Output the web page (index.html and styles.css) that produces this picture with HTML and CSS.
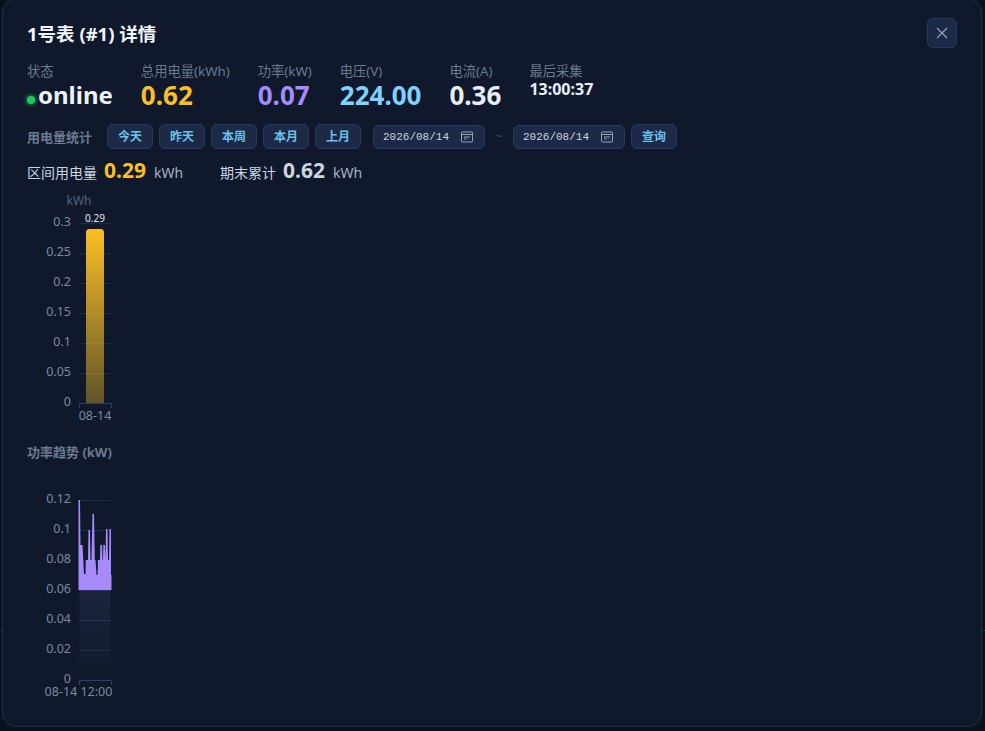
FILE: index.html
```html
<!DOCTYPE html>
<html lang="zh">
<head>
<meta charset="utf-8">
<title>1号表 详情</title>
<link rel="stylesheet" href="styles.css">
</head>
<body>
<div class="backdrop">
  <main class="modal">
    <header class="modal-head">
      <h1 class="title">1号表 (#1) 详情</h1>
      <button class="close" aria-label="关闭">
        <svg class="close-icon" viewBox="0 0 12 12"><path d="M1 1 11 11M11 1 1 11"/></svg>
      </button>
    </header>

    <section class="stats">
      <div class="stat">
        <div class="stat-label">状态</div>
        <div class="stat-value online"><span class="dot"></span>online</div>
      </div>
      <div class="stat">
        <div class="stat-label">总用电量(kWh)</div>
        <div class="stat-value amber">0.62</div>
      </div>
      <div class="stat">
        <div class="stat-label">功率(kW)</div>
        <div class="stat-value violet">0.07</div>
      </div>
      <div class="stat">
        <div class="stat-label">电压(V)</div>
        <div class="stat-value sky">224.00</div>
      </div>
      <div class="stat">
        <div class="stat-label">电流(A)</div>
        <div class="stat-value white">0.36</div>
      </div>
      <div class="stat">
        <div class="stat-label">最后采集</div>
        <div class="stat-time">13:00:37</div>
      </div>
    </section>

    <section class="toolbar">
      <span class="toolbar-label">用电量统计</span>
      <div class="quick">
        <button class="btn">今天</button>
        <button class="btn">昨天</button>
        <button class="btn">本周</button>
        <button class="btn">本月</button>
        <button class="btn">上月</button>
      </div>
      <div class="range">
        <div class="date"><span>2026/08/14</span>
          <svg class="cal" viewBox="0 0 12 12"><path d="M1.500 1h9a1 1 0 0 1 1 1v8a1 1 0 0 1-1 1h-9a1 1 0 0 1-1-1V2a1 1 0 0 1 1-1ZM.5 3.500h11M3 6h6M3 8h2.500M7 8h.5"/></svg>
        </div>
        <span class="tilde">~</span>
        <div class="date"><span>2026/08/14</span>
          <svg class="cal" viewBox="0 0 12 12"><path d="M1.500 1h9a1 1 0 0 1 1 1v8a1 1 0 0 1-1 1h-9a1 1 0 0 1-1-1V2a1 1 0 0 1 1-1ZM.5 3.500h11M3 6h6M3 8h2.500M7 8h.5"/></svg>
        </div>
        <button class="btn">查询</button>
      </div>
    </section>

    <section class="summary">
      <div class="sum-item"><span class="sum-label">区间用电量</span><b class="sum-num amber">0.29</b><span class="sum-unit">kWh</span></div>
      <div class="sum-item"><span class="sum-label">期末累计</span><b class="sum-num pale">0.62</b><span class="sum-unit">kWh</span></div>
    </section>

    <svg class="chart energy" viewBox="0 0 100 232" width="100" height="232">
      <defs>
        <linearGradient id="barFill" x1="0" y1="0" x2="0" y2="1">
          <stop offset="0" stop-color="#fbbf24"/>
          <stop offset="1" stop-color="#fbbf24" stop-opacity=".35"/>
        </linearGradient>
      </defs>
      <text class="axis-name" x="52" y="14" text-anchor="middle">kWh</text>
      <g class="grid">
        <path d="M52 32.500H84M52 62.500H84M52 92.500H84M52 122.500H84M52 152.500H84M52 182.500H84"/>
      </g>
      <path class="bar" fill="url(#barFill)" d="M59 212V41.500a3.500 3.500 0 0 1 3.500-3.500h11A3.500 3.500 0 0 1 77 41.500V212Z"/>
      <path class="axis" d="M52.500 217V212.500H84.500V217"/>
      <g class="tick" text-anchor="end">
        <text x="44" y="35">0.3</text>
        <text x="44" y="65">0.25</text>
        <text x="44" y="95">0.2</text>
        <text x="44" y="125">0.15</text>
        <text x="44" y="155">0.1</text>
        <text x="44" y="185">0.05</text>
        <text x="44" y="215">0</text>
      </g>
      <text class="bar-label" x="68" y="31" text-anchor="middle">0.29</text>
      <text class="tick" x="68" y="229" text-anchor="middle">08-14</text>
    </svg>

    <h2 class="chart-title">功率趋势 (kW)</h2>

    <svg class="chart power" viewBox="0 0 100 220" width="100" height="220">
      <defs>
        <linearGradient id="areaFill" x1="0" y1="0" x2="0" y2="1">
          <stop offset="0" stop-color="#a78bfa" stop-opacity=".09"/>
          <stop offset="1" stop-color="#a78bfa" stop-opacity="0"/>
        </linearGradient>
      </defs>
      <g class="grid">
        <path d="M52 10.500H84M52 40.500H84M52 70.500H84M52 100.500H84M52 130.500H84M52 160.500H84"/>
      </g>
      <rect x="52.500" y="100" width="31" height="90" fill="url(#areaFill)"/>
      <path class="spikes" d="M51.500 100V10H53L53.500 55H55.500L57 84H58.500L58.800 70H61L61.500 40H63L63.500 70H64.500L65.500 24H67L67.800 70H68.500L69.500 85H70.500L71 70H73L73.300 55H75L75.500 70H76L76.300 55H78L78.500 70L79 39H80.500L81 70H82L82.500 39H84V85H84.500V100Z"/>
      <path class="axis" d="M52.500 195V190.500H84.500V195"/>
      <g class="tick" text-anchor="end">
        <text x="44" y="12.500">0.12</text>
        <text x="44" y="42.500">0.1</text>
        <text x="44" y="72.500">0.08</text>
        <text x="44" y="102.500">0.06</text>
        <text x="44" y="132.500">0.04</text>
        <text x="44" y="162.500">0.02</text>
        <text x="44" y="192.500">0</text>
      </g>
      <text class="tick wide" x="51.500" y="206" text-anchor="middle">08-14 12:00</text>
    </svg>
  </main>
</div>
</body>
</html>
```

FILE: styles.css
```css
* { box-sizing: border-box; }

html, body {
  margin: 0;
  height: 100%;
  overflow: hidden;
}

body {
  background: linear-gradient(#1d3a52, #1d3a52) 0 630px / 100% 1px no-repeat, #0a111e;
  font-family: "Noto Sans", "Noto Sans CJK SC", sans-serif;
  color: #e2e8f0;
}

.backdrop {
  height: 731px;
  padding: 0 3px 4px 2px;
  overflow: hidden;
}

.modal {
  height: 729px;
  margin-top: -2px;
  background: #0f192b;
  border: 1px solid #1e3050;
  border-radius: 14px;
  padding: 21px 24px 0;
}

.modal-head {
  display: flex;
  justify-content: space-between;
  align-items: flex-start;
  height: 38px;
}

.title {
  margin: 0;
  font-size: 18.5px;
  line-height: 28px;
  font-weight: 700;
  color: #f1f5f9;
}

.close {
  width: 30px;
  height: 30px;
  margin: -2px 0 0;
  padding: 0;
  background: #1c2a47;
  border: 1px solid #293a5c;
  border-radius: 6px;
  display: flex;
  align-items: center;
  justify-content: center;
}

.close-icon {
  width: 12px;
  height: 12px;
  fill: none;
  stroke: #94a3b8;
  stroke-width: 1.2;
}

.stats {
  display: flex;
  gap: 28px;
  margin-top: 5px;
  height: 53px;
}

.stat-label {
  font-size: 13.300px;
  line-height: 16px;
  color: #6b7a90;
}

.stat-value {
  font-size: 26px;
  line-height: 32px;
  font-weight: 700;
}

.online {
  display: flex;
  align-items: center;
  font-size: 24px;
  color: #eef2fb;
}

.dot {
  width: 8px;
  height: 8px;
  margin: 10px 3px 0 0;
  border-radius: 50%;
  background: #22c55e;
  box-shadow: 0 0 4px #22c55e;
}

.amber { color: #fbbf24; }
.violet { color: #a78bfa; }
.sky { color: #7dd3fc; }
.white { color: #e8eefa; }
.pale { color: #cbd5e1; }

.stat-time {
  font-size: 16px;
  line-height: 20px;
  font-weight: 700;
  color: #e8eefa;
}

.toolbar {
  display: flex;
  align-items: center;
  margin-top: 7px;
  height: 26px;
}

.toolbar-label {
  width: 80px;
  font-size: 13px;
  font-weight: 700;
  color: #6b7a90;
}

.quick,
.range {
  display: flex;
  align-items: center;
  gap: 6px;
}

.range {
  margin-left: 12px;
}

.btn {
  width: 46px;
  height: 25px;
  padding: 0;
  font: 700 12px "Noto Sans", "Noto Sans CJK SC", sans-serif;
  color: #6cc0ea;
  background: #1c2a47;
  border: 1px solid #293a5c;
  border-radius: 6px;
}

.date {
  width: 112px;
  height: 24px;
  margin-top: 1px;
  padding: 0 11px 0 9px;
  display: flex;
  align-items: center;
  justify-content: space-between;
  background: #1c2a47;
  border: 1px solid #293a5c;
  border-radius: 6px;
  font-family: "Liberation Mono", monospace;
  font-size: 11px;
  color: #cbd5e1;
}

.cal {
  width: 12px;
  height: 12px;
  fill: none;
  stroke: #98a2b3;
  stroke-width: 1;
}

.tilde {
  width: 16px;
  text-align: center;
  font-size: 12px;
  color: #3f4e66;
}

.summary {
  display: flex;
  gap: 37px;
  align-items: baseline;
  margin-top: 6px;
  height: 30px;
  line-height: 30px;
}

.sum-item {
  display: flex;
  align-items: baseline;
}

.sum-label {
  font-size: 14px;
  color: #cbd5e1;
}

.sum-num {
  font-size: 21px;
  margin: 0 8px 0 7px;
}

.sum-unit {
  font-size: 14px;
  color: #a3b1c6;
}

.chart {
  display: block;
}

.energy {
  margin: 6px 0 0 0;
}

.chart-title {
  margin: 20px 0 0;
  font-size: 13px;
  line-height: 18px;
  font-weight: 700;
  color: #6b7a90;
}

.power {
  margin-top: 29px;
}

.axis-name {
  font-size: 12px;
  fill: #55647c;
}

.tick text,
text.tick {
  font-size: 12.500px;
  fill: #7b8aa0;
}

.bar-label {
  font-size: 10px;
  fill: #e2e8f0;
}

.grid path {
  fill: none;
  stroke: #1c2c49;
  stroke-width: 1;
}

.axis {
  fill: none;
  stroke: #2e3f5e;
  stroke-width: 1;
}

.spikes {
  fill: #a78bfa;
}
```
